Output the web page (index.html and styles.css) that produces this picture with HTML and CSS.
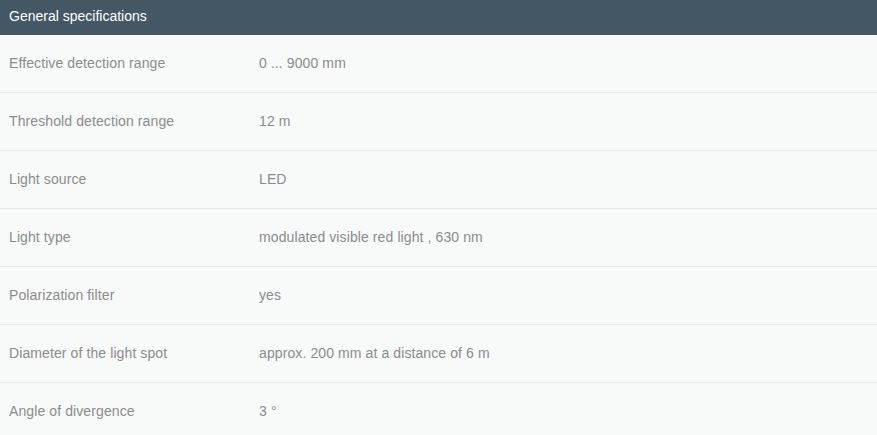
FILE: index.html
```html
<!DOCTYPE html>
<html>
<head>
<meta charset="utf-8">
<link rel="stylesheet" href="styles.css">
</head>
<body>
<div class="specs">
  <div class="specs-head">General specifications</div>
  <div class="row"><div class="label">Effective detection range</div><div class="value">0 ... 9000 mm</div></div>
  <div class="row"><div class="label">Threshold detection range</div><div class="value">12 m</div></div>
  <div class="row"><div class="label">Light source</div><div class="value">LED</div></div>
  <div class="row"><div class="label">Light type</div><div class="value">modulated visible red light , 630 nm</div></div>
  <div class="row"><div class="label">Polarization filter</div><div class="value">yes</div></div>
  <div class="row"><div class="label">Diameter of the light spot</div><div class="value">approx. 200 mm at a distance of 6 m</div></div>
  <div class="row"><div class="label">Angle of divergence</div><div class="value">3 °</div></div>
</div>
</body>
</html>
```
FILE: styles.css
```css
html, body {
  margin: 0;
  padding: 0;
  background: #f8f9f9;
  font-family: "Liberation Sans", Arial, sans-serif;
  font-size: 14px;
}
.specs {
  width: 877px;
}
.specs-head {
  height: 35px;
  background: #435764;
  color: #ffffff;
  padding: 0 9px;
  display: flex;
  align-items: center;
  padding-bottom: 3px;
  box-sizing: border-box;
}
.row {
  display: flex;
  align-items: center;
  height: 58px;
  padding-bottom: 2px;
  box-sizing: border-box;
  border-bottom: 1px solid #e4e6e7;
  color: #8a8c8e;
  letter-spacing: 0.1px;
}
.label {
  width: 250px;
  padding-left: 9px;
}
.value {
  flex: 1;
}
```
